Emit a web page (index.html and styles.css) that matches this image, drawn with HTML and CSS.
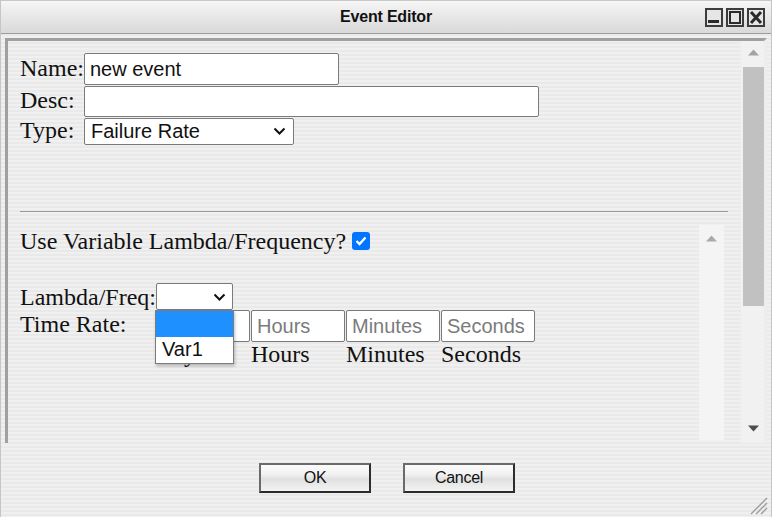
FILE: index.html
```html
<!DOCTYPE html>
<html>
<head>
<meta charset="utf-8">
<link rel="stylesheet" href="styles.css">
</head>
<body>
<div class="window">
  <div class="titlebar">
    <span></span>
    <div class="title">Event Editor</div>
    <div class="controls">
      <div class="ctl"><svg width="14" height="15" viewBox="0 0 14 15"><rect x="1" y="10" width="11" height="3" fill="#2b2b2b"/></svg></div>
      <div class="ctl"><svg width="14" height="15" viewBox="0 0 14 15"><rect x="2" y="2" width="10" height="11" fill="none" stroke="#2b2b2b" stroke-width="2"/></svg></div>
      <div class="ctl"><svg width="14" height="15" viewBox="0 0 14 15"><path d="M2 2 L12 13 M12 2 L2 13" stroke="#2b2b2b" stroke-width="3"/></svg></div>
    </div>
  </div>

  <div class="main">
    <div class="panel">
      <div class="content">
        <div class="fields">
          <label class="lbl">Name:</label>
          <input class="txt name" type="text" value="new event">
          <label class="lbl">Desc:</label>
          <input class="txt desc" type="text" value="">
          <label class="lbl">Type:</label>
          <div class="selwrap type">
            <div class="sel">Failure Rate</div>
            <svg class="chev" width="13" height="8" viewBox="0 0 13 8"><polyline points="1.5,1.5 6.5,6.5 11.5,1.5" fill="none" stroke="#111" stroke-width="2"/></svg>
          </div>
        </div>
        <div class="rule"></div>
        <div class="inner">
          <div class="inner-content">
            <div class="line">Use Variable Lambda/Frequency? <span class="check"><svg width="12" height="10" viewBox="0 0 12 10"><polyline points="1.5,5 4.5,8 10.5,1.5" fill="none" stroke="#fff" stroke-width="2.4"/></svg></span></div>
            <div class="line blank"></div>
            <div class="form2">
              <div class="lbl2">Lambda/Freq:</div>
              <div class="selwrap lam">
                <div class="sel"></div>
                <svg class="chev" width="13" height="8" viewBox="0 0 13 8"><polyline points="1.5,1.5 6.5,6.5 11.5,1.5" fill="none" stroke="#111" stroke-width="2"/></svg>
                <div class="popup">
                  <div class="opt hl"></div>
                  <div class="opt">Var1</div>
                </div>
              </div>
              <div class="lbl2 top">Time Rate:</div>
              <div class="times">
                <input class="txt t" type="text" placeholder="Days">
                <input class="txt t" type="text" placeholder="Hours">
                <input class="txt t" type="text" placeholder="Minutes">
                <input class="txt t" type="text" placeholder="Seconds">
                <div class="tl">Days</div>
                <div class="tl">Hours</div>
                <div class="tl">Minutes</div>
                <div class="tl">Seconds</div>
              </div>
            </div>
          </div>
          <div class="iscroll">
            <svg width="11" height="7" viewBox="0 0 11 7"><polygon points="0,6.5 5.5,0.5 11,6.5" fill="#a9a9a9"/></svg>
          </div>
        </div>
      </div>
      <div class="oscroll">
        <div class="arrow"><svg width="11" height="7" viewBox="0 0 11 7"><polygon points="0,6.5 5.5,0.5 11,6.5" fill="#a3a3a3"/></svg></div>
        <div class="thumb"></div>
        <div class="fill"></div>
        <div class="arrow down"><svg width="11" height="7" viewBox="0 0 11 7"><polygon points="0,0.5 11,0.5 5.5,6.5" fill="#4d4d4d"/></svg></div>
      </div>
    </div>
  </div>

  <div class="buttons">
    <button class="btn">OK</button>
    <button class="btn">Cancel</button>
  </div>

  <svg class="grip" width="20" height="20" viewBox="0 0 20 20">
    <path d="M19 3 L3 19 M19 8 L8 19 M19 13 L13 19" stroke="#9a9a9a" stroke-width="1.3"/>
  </svg>
</div>
</body>
</html>
```

FILE: styles.css
```css
* { box-sizing: border-box; }
html, body { margin: 0; padding: 0; }
body { width: 772px; height: 517px; overflow: hidden; }

.window {
  position: relative;
  width: 772px;
  height: 517px;
  display: flex;
  flex-direction: column;
  border-left: 1px solid #c6c6c6;
  border-right: 1px solid #c6c6c6;
  background: repeating-linear-gradient(to bottom, #f0f0f0 0 2px, #e9e9e9 2px 4px);
  font-family: "Liberation Serif", "Times New Roman", serif;
}

.titlebar {
  height: 34px;
  flex: none;
  display: grid;
  grid-template-columns: 1fr auto 1fr;
  align-items: center;
  border-top: 1px solid #c8c8c8;
  border-bottom: 1px solid #9c9c9c;
  background: linear-gradient(to bottom, #f6f6f6, #e4e4e4 60%, #d9d9d9);
}
.title {
  font-family: "Liberation Sans", Arial, sans-serif;
  font-weight: bold;
  font-size: 16px;
  color: #111;
  letter-spacing: -0.2px;
}
.controls {
  justify-self: end;
  display: flex;
  gap: 3px;
  padding-right: 6px;
  margin-top: 1px;
}
.ctl {
  width: 18px;
  height: 19px;
  border: 2px solid #3c3c3c;
  background: #e6e6e6;
  display: flex;
  align-items: center;
  justify-content: center;
}
.ctl svg { display: block; }

.main {
  flex: none;
  padding: 4px 4px 0 4px;
}
.panel {
  display: flex;
  height: 405px;
  border-top: 3px solid #a0a0a0;
  border-left: 3px solid #a0a0a0;
  border-right: 3px solid #ededed;
  border-bottom: 0;
}
.content {
  flex: 1;
  padding: 12px 0 0 12px;
  font-size: 24px;
  color: #111;
}
.fields {
  display: grid;
  grid-template-columns: 64px auto;
  justify-content: start;
  align-items: baseline;
}
.lbl { line-height: 1; }
.txt {
  font-family: "Liberation Sans", Arial, sans-serif;
  font-size: 20px;
  color: #111;
  border: 1px solid #7a7a7a;
  border-radius: 2px;
  background: #fff;
  padding: 0 5px;
  margin: 0;
  outline: none;
}
.txt::placeholder { color: #7b7b7b; }
.name { width: 255px; height: 32px; }
.desc { width: 455px; height: 31px; margin-top: 1px; }
.selwrap { position: relative; }
.sel {
  font-family: "Liberation Sans", Arial, sans-serif;
  font-size: 20px;
  color: #111;
  border: 1px solid #7a7a7a;
  border-radius: 2px;
  background: #fff;
  padding: 0 6px;
  height: 27px;
  line-height: 25px;
}
.type { width: 210px; margin-top: 1px; }
.chev { position: absolute; right: 8px; top: 9px; }

.rule {
  height: 1px;
  background: #9a9a9a;
  margin: 66px 13px 0 0;
}
.inner {
  display: flex;
  height: 215px;
  margin: 13px 17px 0 0;
}
.inner-content {
  flex: 1;
  padding-top: 3px;
}
.line { line-height: 26.6px; }
.blank { height: 26.6px; }
.check {
  display: inline-block;
  width: 18px;
  height: 18px;
  background: #0075ff;
  border-radius: 3px;
  vertical-align: -1px;
  margin-left: 0;
  position: relative;
}
.check svg { position: absolute; left: 3px; top: 4px; }

.form2 {
  display: grid;
  grid-template-columns: 136px auto;
  grid-template-rows: 27px auto;
  justify-content: start;
  margin-top: 2px;
}
.lbl2 { line-height: 26.6px; padding-top: 1px; height: 27px; }
.lbl2.top { padding-top: 1px; height: auto; }
.lam { width: 77px; height: 27px; }
.lam .chev { right: 7px; top: 10px; }
.popup {
  position: absolute;
  left: -1px;
  top: 27px;
  width: 79px;
  height: 54px;
  background: #fff;
  border: 1px solid #7c7c7c;
  box-shadow: 1px 2px 3px rgba(0,0,0,0.25);
  z-index: 5;
  font-family: "Liberation Sans", Arial, sans-serif;
  font-size: 20px;
  color: #111;
}
.opt { height: 25px; line-height: 24px; padding-left: 6px; }
.opt.hl { height: 26px; background: #1e90ff; }

.times {
  display: grid;
  grid-template-columns: repeat(4, 94px);
  column-gap: 1px;
}
.t { width: 94px; height: 32px; }
.tl { line-height: 26.6px; margin-top: -1px; }

.iscroll {
  width: 25px;
  background: #f4f4f4;
  display: flex;
  justify-content: center;
  padding-top: 10px;
}
.iscroll svg { display: block; }

.oscroll {
  width: 23px;
  background: #f1f1f1;
  display: flex;
  flex-direction: column;
}
.oscroll .arrow {
  height: 22px;
  display: flex;
  align-items: center;
  justify-content: center;
  padding-left: 2px;
}
.oscroll .arrow.down { margin-bottom: 4px; }
.oscroll .arrow svg { display: block; }
.thumb {
  height: 239px;
  margin: 4px 0 0 2px;
  background: #c1c1c1;
}
.fill { flex: 1; }

.buttons {
  display: flex;
  justify-content: center;
  gap: 32px;
  padding-top: 20px;
  padding-left: 2px;
}
.btn {
  width: 112px;
  height: 30px;
  font-family: "Liberation Sans", Arial, sans-serif;
  font-size: 16px;
  color: #111;
  border: 2px solid #2c2c2c;
  border-top-color: #6a6a6a;
  border-left-color: #6a6a6a;
  background: linear-gradient(to bottom, #fbfbfb, #f2f2f2 35%, #e0e0e0 55%, #f4f4f4);
  padding: 0;
  margin: 0;
  letter-spacing: -0.3px;
}
.grip { position: absolute; right: 3px; bottom: 2px; }
```
